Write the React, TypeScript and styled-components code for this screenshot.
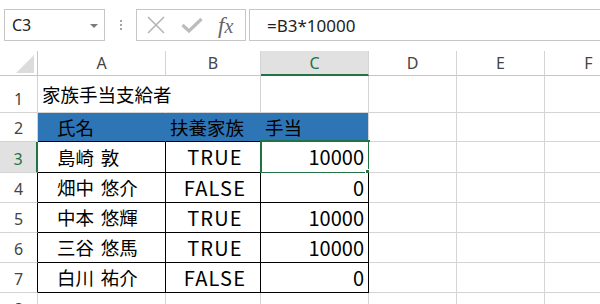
import styled, { createGlobalStyle } from "styled-components";

const GlobalStyle = createGlobalStyle`
  html, body {
    margin: 0;
    padding: 0;
    background: #fff;
    overflow: hidden;
  }
  body {
    font-family: "Noto Sans", "Liberation Sans", sans-serif;
  }
`;

const GRID = "#d4d4d4";
const FRAME = "#c6c6c6";
const GREEN = "#217346";
const BLUE = "#2e75b6";

type Edge = "grid" | "black" | "blue" | "none";
type Kind = "title" | "head" | "name" | "bool" | "num";

const edgeColor = (e: Edge) =>
  e === "black" ? "#000" : e === "blue" ? BLUE : e === "none" ? "transparent" : GRID;

const COLS = ["A", "B", "C", "D", "E", "F"];
const COL_W = [128, 95, 108, 88, 88, 88];
const ROW_H = [37, 29, 31, 30, 30, 30, 30, 30];

const table: { text: string; kind: Kind }[][] = [
  [{ text: "家族手当支給者", kind: "title" }],
  [
    { text: "氏名", kind: "head" },
    { text: "扶養家族", kind: "head" },
    { text: "手当", kind: "head" },
  ],
  [
    { text: "島崎 敦", kind: "name" },
    { text: "TRUE", kind: "bool" },
    { text: "10000", kind: "num" },
  ],
  [
    { text: "畑中 悠介", kind: "name" },
    { text: "FALSE", kind: "bool" },
    { text: "0", kind: "num" },
  ],
  [
    { text: "中本 悠輝", kind: "name" },
    { text: "TRUE", kind: "bool" },
    { text: "10000", kind: "num" },
  ],
  [
    { text: "三谷 悠馬", kind: "name" },
    { text: "TRUE", kind: "bool" },
    { text: "10000", kind: "num" },
  ],
  [
    { text: "白川 祐介", kind: "name" },
    { text: "FALSE", kind: "bool" },
    { text: "0", kind: "num" },
  ],
];

const App = () => {
  return (
    <>
      <GlobalStyle />
      <FormulaBar>
        <NameBox>
          <span>C3</span>
          <Caret />
        </NameBox>
        <Grip>
          <i />
          <i />
          <i />
        </Grip>
        <FxBox>
          <svg width="18" height="18" viewBox="0 0 18 18">
            <path d="M1 1 L17 17 M17 1 L1 17" stroke="#b4b4b4" strokeWidth="1.6" fill="none" />
          </svg>
          <svg width="22" height="16" viewBox="0 0 22 16">
            <path d="M1.5 8 L8 14 L20.5 2" stroke="#bcbcbc" strokeWidth="3.2" fill="none" />
          </svg>
          <FxLabel>
            f<span>x</span>
          </FxLabel>
        </FxBox>
        <FormulaInput>=B3*10000</FormulaInput>
      </FormulaBar>

      <Sheet>
        <Corner>
          <Triangle />
        </Corner>
        {COLS.map((c) => (
          <ColHead key={c} $active={c === "C"}>
            {c}
          </ColHead>
        ))}

        {ROW_H.map((_, r) => {
          const rowNo = r + 1;
          const inTable = rowNo >= 3 && rowNo <= 7;
          return [
            <RowHead key={`h${rowNo}`} $active={rowNo === 3} $edge={inTable ? "black" : "grid"}>
              {rowNo}
            </RowHead>,
            ...COLS.map((c, ci) => {
              const data = table[r]?.[ci];
              const inRange = ci <= 2;
              const isHead = rowNo === 2 && inRange;
              const right: Edge =
                rowNo === 1 && ci === 0
                  ? "none"
                  : isHead
                  ? ci === 2
                    ? "grid"
                    : "blue"
                  : inTable && inRange
                  ? "black"
                  : "grid";
              const bottom: Edge =
                (rowNo === 2 || inTable) && inRange ? "black" : "grid";
              const align =
                data?.kind === "bool" ? "center" : data?.kind === "num" ? "flex-end" : "flex-start";
              const indent = data?.kind === "name" || (isHead && ci === 0) ? 19 : 4;
              return (
                <Cell
                  key={`${c}${rowNo}`}
                  $right={right}
                  $bottom={bottom}
                  $fill={isHead ? BLUE : undefined}
                  $align={align}
                  $indent={indent}
                  $top={rowNo === 1 && ci === 0}
                >
                  {data && (
                    <CellText
                      $latin={data.kind === "bool" || data.kind === "num"}
                      $spaced={data.kind === "bool"}
                      $name={data.kind === "name"}
                    >
                      {data.text}
                    </CellText>
                  )}
                  {c === "C" && rowNo === 3 && (
                    <Selection>
                      <Handle />
                    </Selection>
                  )}
                </Cell>
              );
            }),
          ];
        })}
      </Sheet>
    </>
  );
};

export default App;

const FormulaBar = styled.div`
  box-sizing: border-box;
  height: 51px;
  padding: 9px 0 0 4px;
  display: flex;
  align-items: flex-start;
`;

const NameBox = styled.div`
  box-sizing: border-box;
  width: 101px;
  height: 32px;
  border: 1px solid ${FRAME};
  display: flex;
  align-items: center;
  justify-content: space-between;
  padding: 0 6px 0 7px;
  font-size: 16px;
  color: #222;
`;

const Caret = styled.span`
  width: 0;
  height: 0;
  border-left: 4px solid transparent;
  border-right: 4px solid transparent;
  border-top: 4px solid #7a7a7a;
  margin-top: 1px;
`;

const Grip = styled.div`
  width: 31px;
  height: 32px;
  display: flex;
  flex-direction: column;
  align-items: center;
  justify-content: center;
  gap: 2px;
  i {
    width: 2px;
    height: 2px;
    background: #a6a6a6;
  }
`;

const FxBox = styled.div`
  box-sizing: border-box;
  width: 110px;
  height: 32px;
  border: 1px solid ${FRAME};
  display: flex;
  align-items: center;
  padding-left: 10px;
  gap: 16px;
  svg {
    display: block;
  }
`;

const FxLabel = styled.span`
  font-family: "Liberation Serif", "DejaVu Serif", serif;
  font-style: italic;
  font-size: 23px;
  color: #666;
  line-height: 1;
  margin-left: -1px;
  span {
    font-size: 20px;
  }
`;

const FormulaInput = styled.div`
  box-sizing: border-box;
  flex: 1;
  height: 32px;
  margin-left: 3px;
  border: 1px solid ${FRAME};
  border-right: none;
  display: flex;
  align-items: center;
  padding-left: 17px;
  font-size: 17px;
  color: #222;
`;

const Sheet = styled.div`
  display: grid;
  grid-template-columns: 38px ${COL_W.map((w) => `${w}px`).join(" ")};
  grid-template-rows: 25px ${ROW_H.map((h) => `${h}px`).join(" ")};
  width: ${38 + COL_W.reduce((a, b) => a + b, 0)}px;
`;

const Corner = styled.div`
  box-sizing: border-box;
  border-right: 1px solid ${FRAME};
  border-bottom: 1px solid ${FRAME};
  display: flex;
  align-items: flex-end;
  justify-content: flex-end;
  padding: 0 3px 2px 0;
`;

const Triangle = styled.span`
  width: 0;
  height: 0;
  border-left: 18px solid transparent;
  border-bottom: 18px solid #dcdcdc;
`;

const ColHead = styled.div<{ $active?: boolean }>`
  box-sizing: border-box;
  display: flex;
  align-items: center;
  justify-content: center;
  font-size: 16px;
  color: ${(p) => (p.$active ? GREEN : "#444")};
  background: ${(p) => (p.$active ? "#e1e1e1" : "#fff")};
  border-right: 1px solid ${GRID};
  border-bottom: ${(p) => (p.$active ? `2px solid ${GREEN}` : `1px solid ${FRAME}`)};
  padding-top: ${(p) => (p.$active ? 1 : 0)}px;
`;

const RowHead = styled.div<{ $active?: boolean; $edge: Edge }>`
  box-sizing: border-box;
  display: flex;
  align-items: flex-end;
  justify-content: center;
  padding-bottom: 2px;
  font-size: 16px;
  color: ${(p) => (p.$active ? GREEN : "#444")};
  background: ${(p) => (p.$active ? "#e1e1e1" : "#fff")};
  border-right: ${(p) => (p.$active ? `2px solid ${GREEN}` : `1px solid ${edgeColor(p.$edge)}`)};
  border-bottom: 1px solid ${GRID};
`;

const Cell = styled.div<{
  $right: Edge;
  $bottom: Edge;
  $fill?: string;
  $align: string;
  $indent: number;
  $top?: boolean;
}>`
  box-sizing: border-box;
  position: relative;
  z-index: ${(p) => (p.$top ? 1 : "auto")};
  display: flex;
  align-items: center;
  justify-content: ${(p) => p.$align};
  padding: 0 ${(p) => (p.$align === "flex-end" ? 4 : 0)}px 0 ${(p) => p.$indent}px;
  background: ${(p) => p.$fill ?? "#fff"};
  border-right: 1px solid ${(p) => edgeColor(p.$right)};
  border-bottom: 1px solid ${(p) => edgeColor(p.$bottom)};
  white-space: nowrap;
  font-family: "Noto Sans CJK JP", "Noto Sans", sans-serif;
  color: #000;
`;

const CellText = styled.span<{ $latin?: boolean; $spaced?: boolean; $name?: boolean }>`
  font-size: ${(p) => (p.$latin ? 20 : 18.5)}px;
  letter-spacing: ${(p) => (p.$spaced ? 1.2 : 0)}px;
  word-spacing: ${(p) => (p.$name ? 2.5 : 0)}px;
  line-height: 1;
`;

const Selection = styled.div`
  position: absolute;
  top: -2px;
  left: -1px;
  right: -2px;
  bottom: -2px;
  border: 2px solid ${GREEN};
  pointer-events: none;
`;

const Handle = styled.span`
  position: absolute;
  right: -5px;
  bottom: -5px;
  width: 6px;
  height: 6px;
  background: ${GREEN};
  border: 1px solid #fff;
`;
